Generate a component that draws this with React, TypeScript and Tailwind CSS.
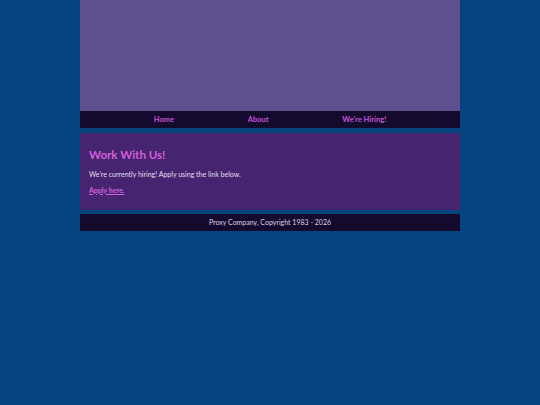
export default function App() {
  return (
    <div className="min-h-[405px] bg-[#04457f] font-['Lato','Noto_Sans',sans-serif]">
      <div className="mx-auto w-[380px]">
        <header className="h-[111px] bg-[#5f4f8e]" />
        <nav className="flex h-[17px] items-center justify-evenly bg-[#140a2e] text-[7.5px] font-bold text-[#c554d6]">
          <a href="#">Home</a>
          <a href="#">About</a>
          <a href="#">We're Hiring!</a>
        </nav>
        <main className="mt-[5px] h-[77px] bg-[#46246f] px-[9px] pt-[16px]">
          <h1 className="text-[11.5px] font-bold leading-none text-[#d25edc]">Work With Us!</h1>
          <p className="mt-[10px] text-[7px] leading-none text-[#e4ddee]">
            We're currently hiring! Apply using the link below.
          </p>
          <a href="#" className="mt-[9px] block text-[7px] font-bold leading-none text-[#d25edc] underline">
            Apply here.
          </a>
        </main>
        <footer className="mt-[4px] flex h-[17px] items-center justify-center bg-[#140a2e] text-[7px] text-[#d8d2e6]">
          Proxy Company, Copyright 1983 - 2026
        </footer>
      </div>
    </div>
  );
}
